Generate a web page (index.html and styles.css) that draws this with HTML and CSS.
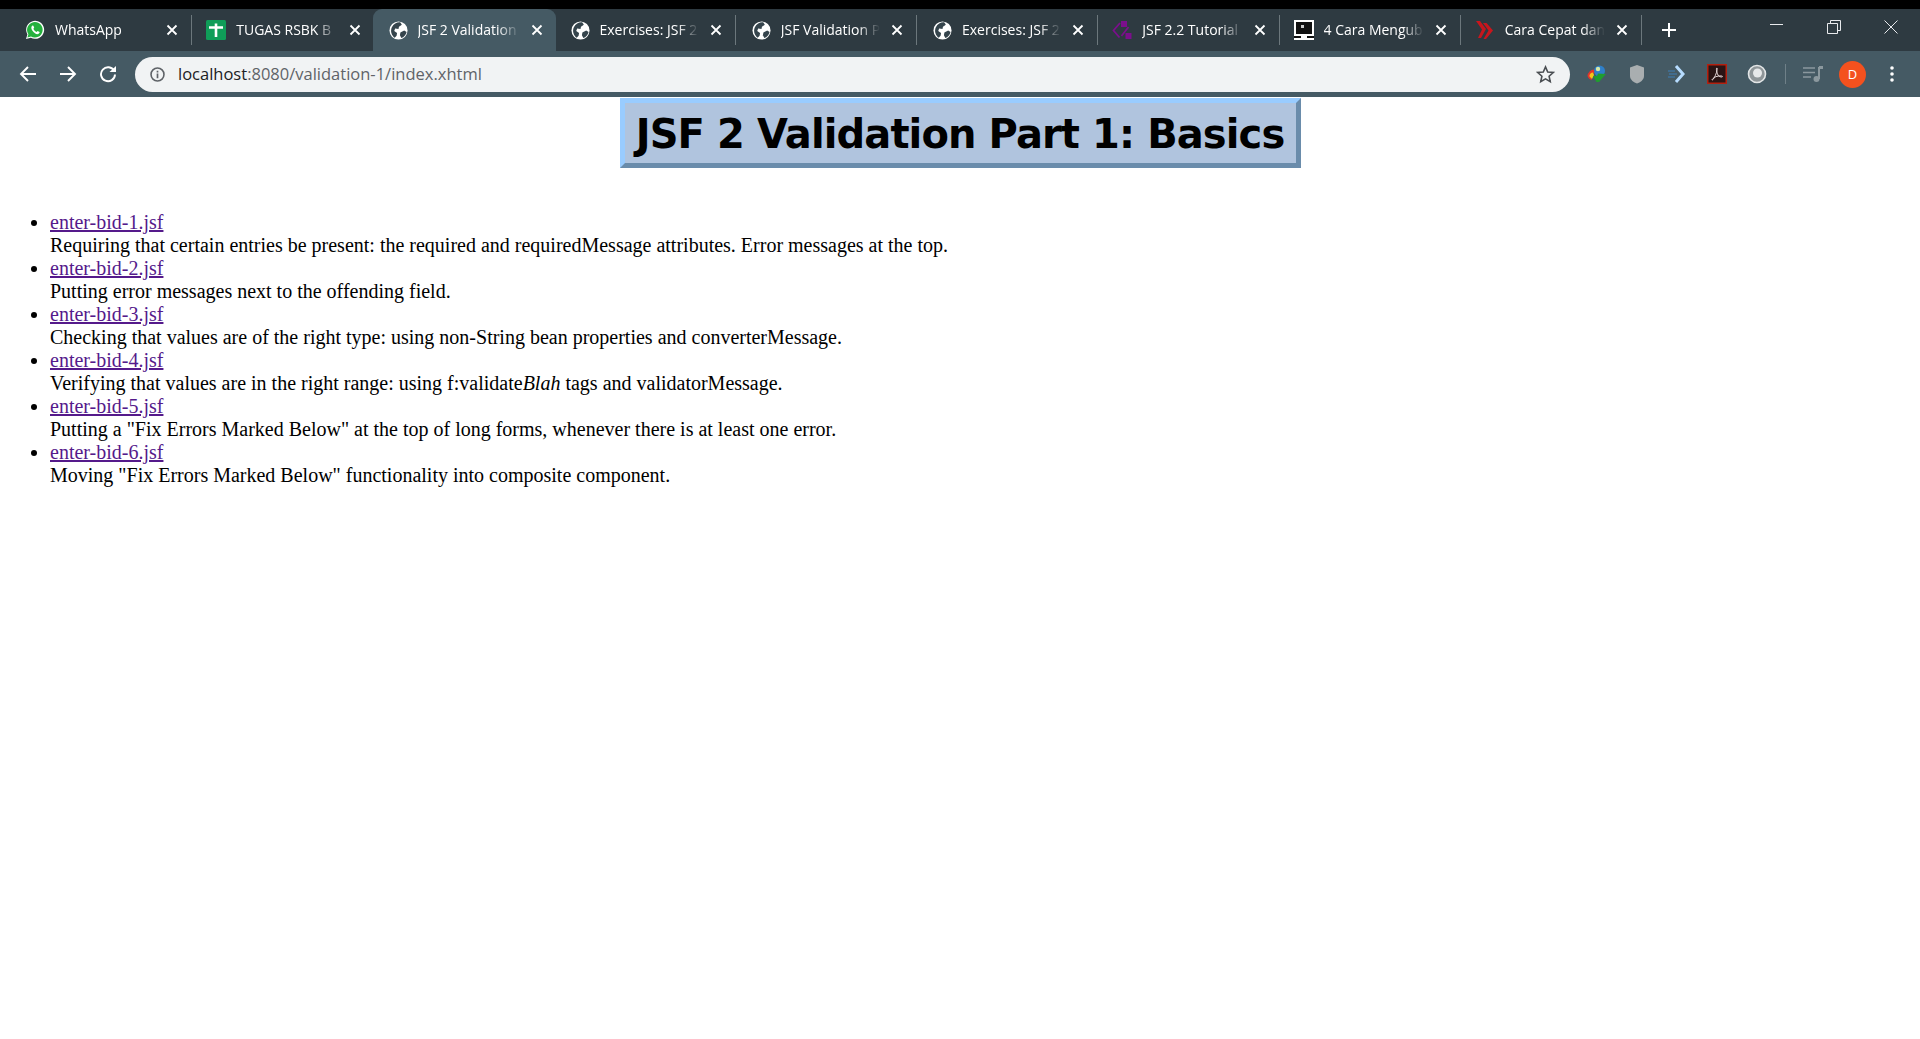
FILE: index.html
```html
<!DOCTYPE html>
<html>
<head>
  <title>JSF 2 Validation Part 1: Basics</title>
  <link rel="stylesheet" href="styles.css">
</head>
<body>
  <svg class="defs" width="0" height="0">
    <symbol id="globe" viewBox="0 0 20 20">
      <circle cx="10" cy="10" r="9.5" fill="#fff"/>
      <path d="M3 6.5 C5 2.5 9 1 12 1.5 L13.5 4 L10.5 6 L10 8.5 L6.5 8 L5.5 10.5 L8.5 12.5 L8 15.5 L6 17.5 C3 15.5 1 11 3 6.5Z" fill="#35444c"/>
      <path d="M12 12 L16 10 L18.5 11.5 C18 14.5 15.5 17 13 18 L11.5 15Z" fill="#35444c"/>
    </symbol>
    <symbol id="close" viewBox="0 0 12 12">
      <path d="M1.5 1.5 L10.5 10.5 M10.5 1.5 L1.5 10.5" stroke="#fff" stroke-width="1.8" fill="none"/>
    </symbol>
  </svg>

  <div class="titlebar"></div>

  <div class="tabstrip">
    <div class="tab">
      <svg class="favicon" viewBox="0 0 20 20">
        <path d="M1 19 L2.4 14.4 A9 9 0 1 1 5.8 17.7Z" fill="#fff"/>
        <path d="M2.4 17.6 L3.4 14.2 A7.8 7.8 0 1 1 6 16.6Z" fill="#25b13e"/>
        <path d="M7.4 5.6 C6 6.6 5.8 8.6 7.6 11 C9.4 13.4 11.6 14.6 13.2 14 C14.2 13.6 14.8 12.6 14.6 12 L12.6 11 L11.6 12 C10.4 11.6 8.8 10 8.4 8.8 L9.2 7.8 L8.4 5.8Z" fill="#fff"/>
      </svg>
      <span class="tab-title">WhatsApp</span>
      <svg class="tab-close"><use href="#close"/></svg>
    </div>
    <div class="tab tab-plain">
      <svg class="favicon" viewBox="0 0 20 20">
        <rect width="20" height="20" rx="1.5" fill="#0f9d58"/>
        <path d="M3 7.5 H17 M10 3.5 V17" stroke="#fff" stroke-width="2.6" fill="none"/>
      </svg>
      <span class="tab-title">TUGAS RSBK B</span>
      <svg class="tab-close"><use href="#close"/></svg>
    </div>
    <div class="tab tab-active">
      <svg class="favicon globe"><use href="#globe"/></svg>
      <span class="tab-title">JSF 2 Validation</span>
      <svg class="tab-close"><use href="#close"/></svg>
    </div>
    <div class="tab">
      <svg class="favicon globe"><use href="#globe"/></svg>
      <span class="tab-title">Exercises: JSF 2</span>
      <svg class="tab-close"><use href="#close"/></svg>
    </div>
    <div class="tab">
      <svg class="favicon globe"><use href="#globe"/></svg>
      <span class="tab-title">JSF Validation P</span>
      <svg class="tab-close"><use href="#close"/></svg>
    </div>
    <div class="tab">
      <svg class="favicon globe"><use href="#globe"/></svg>
      <span class="tab-title">Exercises: JSF 2</span>
      <svg class="tab-close"><use href="#close"/></svg>
    </div>
    <div class="tab">
      <svg class="favicon" viewBox="0 0 20 20">
        <path d="M8 3 L1.5 10.5 L7.5 17.5 M16.5 7 L9.5 16" stroke="#7b0f8c" stroke-width="1.8" fill="none"/>
        <rect x="9" y="1" width="6" height="6" fill="#7b0f8c"/>
        <rect x="13.5" y="13" width="6" height="6" fill="#7b0f8c"/>
      </svg>
      <span class="tab-title">JSF 2.2 Tutorial</span>
      <svg class="tab-close"><use href="#close"/></svg>
    </div>
    <div class="tab">
      <svg class="favicon" viewBox="0 0 20 20">
        <rect x="0" y="0" width="20" height="20" fill="#fff"/>
        <rect x="2" y="2" width="16" height="12" fill="#111"/>
        <rect x="7" y="5" width="3" height="3" fill="#ccc"/>
        <rect x="0" y="16" width="7" height="2" fill="#111"/>
        <rect x="13" y="16" width="7" height="2" fill="#111"/>
      </svg>
      <span class="tab-title">4 Cara Mengub</span>
      <svg class="tab-close"><use href="#close"/></svg>
    </div>
    <div class="tab">
      <svg class="favicon" viewBox="0 0 20 20">
        <path d="M1 1 H5 L11 9 L6 18 H3 L7 9.5Z M8 3 H11.5 L18 10.5 L11 19 H8.5 L13.5 10.5Z" fill="#c8161d"/>
      </svg>
      <span class="tab-title">Cara Cepat dan</span>
      <svg class="tab-close"><use href="#close"/></svg>
    </div>
    <svg class="new-tab" viewBox="0 0 14 14">
      <path d="M7 0 V14 M0 7 H14" stroke="#fff" stroke-width="2" fill="none"/>
    </svg>
    <div class="window-controls">
      <svg class="win-btn" viewBox="0 0 14 14"><path d="M0 4.5 H13" stroke="#e8eaed" fill="none"/></svg>
      <svg class="win-btn" viewBox="0 0 14 14"><path d="M.5 3.5 H10.5 V13.5 H.5Z M3.5 3.5 V.5 H13.5 V10.5 H10.5" stroke="#e8eaed" fill="none"/></svg>
      <svg class="win-btn" viewBox="0 0 14 14"><path d="M.5 .5 L13.5 13.5 M13.5 .5 L.5 13.5" stroke="#e8eaed" fill="none"/></svg>
    </div>
  </div>

  <div class="toolbar">
    <button class="tool-btn">
      <svg viewBox="0 0 18 18" width="18" height="18"><path d="M17 9 H2 M9 2 L2 9 L9 16" stroke="#fff" stroke-width="1.9" fill="none"/></svg>
    </button>
    <button class="tool-btn">
      <svg viewBox="0 0 18 18" width="18" height="18"><path d="M1 9 H16 M9 2 L16 9 L9 16" stroke="#fff" stroke-width="1.9" fill="none"/></svg>
    </button>
    <button class="tool-btn">
      <svg viewBox="0 0 18 18" width="18" height="18"><path d="M15.2 6 A7 7 0 1 0 16 9.5" stroke="#fff" stroke-width="1.9" fill="none"/><path d="M10.5 7 H17 V1Z" fill="#fff"/></svg>
    </button>
    <div class="omnibox">
      <svg class="info" viewBox="0 0 16 16">
        <circle cx="8" cy="8" r="6.9" stroke="#5f6368" stroke-width="1.7" fill="none"/>
        <path d="M8 7 V12 M8 4 V5.8" stroke="#5f6368" stroke-width="1.8" fill="none"/>
      </svg>
      <span class="url"><span class="host">localhost</span>:8080/validation-1/index.xhtml</span>
      <svg class="star" viewBox="0 0 18 18">
        <path d="M9 1.8 L11.1 6.6 L16.3 7.1 L12.4 10.6 L13.5 15.8 L9 13.1 L4.5 15.8 L5.6 10.6 L1.7 7.1 L6.9 6.6Z" stroke="#4a4e52" stroke-width="1.5" fill="none"/>
      </svg>
    </div>
    <div class="extensions">
      <button class="tool-btn">
        <svg viewBox="0 0 20 20" width="20" height="20">
          <path d="M0.5 12 A7 7 0 0 1 7 5.5 L8 9 A4 4 0 0 0 4 13 L5 16 A6 6 0 0 1 0.5 12Z" fill="#e3342b"/>
          <path d="M2.5 12.5 A3.5 3.5 0 0 1 6 8.5 L7 11 L5 15Z" fill="#f5c518"/>
          <circle cx="12.5" cy="7" r="5.5" fill="#2f7fc9"/>
          <circle cx="11" cy="5" r="2.2" fill="#d5e8a8"/>
          <path d="M6 12 H10 L11 9.5 L19 10 L12 18 L9.5 18 Z" fill="#1f9d2f"/>
        </svg>
      </button>
      <button class="tool-btn">
        <svg viewBox="0 0 16 20" width="16" height="20"><path d="M8 1 L15 3.5 V12 C15 16 11 18.5 8 19.5 C5 18.5 1 16 1 12 V3.5Z" fill="#a9aeb0"/></svg>
      </button>
      <button class="tool-btn">
        <svg viewBox="0 0 20 20" width="20" height="20">
          <path d="M9 2 L16 10 L9 18" stroke="#b6dcff" stroke-width="3" fill="none"/>
          <path d="M1 7 H8 M2 10 H10 M1 13 H8" stroke="#3f7fb8" stroke-width="1" fill="none"/>
        </svg>
      </button>
      <button class="tool-btn">
        <svg viewBox="0 0 20 20" width="20" height="20">
          <rect x=".75" y=".75" width="18.5" height="18.5" fill="#2a1414" stroke="#b3200f" stroke-width="1.5"/>
          <path d="M10 4 C8.6 4 10 9 11 11 C12 13 15.5 13.5 15.5 12.5 C15.5 11.5 9 11.5 6 14.5 C4.5 16 5 16.5 6 15.5 C7.5 14 9.5 9 10 6.5 C10.2 5 10.3 4 10 4Z" stroke="#e8d8d8" stroke-width="1" fill="none"/>
        </svg>
      </button>
      <button class="tool-btn">
        <svg viewBox="0 0 20 20" width="20" height="20">
          <circle cx="10" cy="10" r="8.5" fill="#8f9699" stroke="#e3e6e7" stroke-width="1.6"/>
          <circle cx="10.5" cy="9" r="4.5" fill="#e6e8e9"/>
        </svg>
      </button>
      <span class="tool-sep"></span>
      <button class="tool-btn">
        <svg viewBox="0 0 20 18" width="20" height="18">
          <path d="M0 3 H12 M0 7.5 H12 M0 12 H8" stroke="#8b989e" stroke-width="1.7" fill="none"/>
          <path d="M16 2 V14" stroke="#8b989e" stroke-width="2" fill="none"/>
          <path d="M16 1 H20 V4 H16Z" fill="#8b989e"/>
          <circle cx="13.5" cy="14" r="3" fill="#8b989e"/>
        </svg>
      </button>
      <span class="avatar">D</span>
      <button class="tool-btn">
        <svg viewBox="0 0 4 16" width="4" height="16"><circle cx="2" cy="2" r="1.8" fill="#fff"/><circle cx="2" cy="8" r="1.8" fill="#fff"/><circle cx="2" cy="14" r="1.8" fill="#fff"/></svg>
      </button>
    </div>
  </div>

  <div class="page">
    <h1 class="title">JSF 2 Validation Part 1: Basics</h1>
    <ul class="examples">
      <li><a href="#">enter-bid-1.jsf</a><br>Requiring that certain entries be present: the required and requiredMessage attributes. Error messages at the top.</li>
      <li><a href="#">enter-bid-2.jsf</a><br>Putting error messages next to the offending field.</li>
      <li><a href="#">enter-bid-3.jsf</a><br>Checking that values are of the right type: using non-String bean properties and converterMessage.</li>
      <li><a href="#">enter-bid-4.jsf</a><br>Verifying that values are in the right range: using f:validate<i>Blah</i> tags and validatorMessage.</li>
      <li><a href="#">enter-bid-5.jsf</a><br>Putting a "Fix Errors Marked Below" at the top of long forms, whenever there is at least one error.</li>
      <li><a href="#">enter-bid-6.jsf</a><br>Moving "Fix Errors Marked Below" functionality into composite component.</li>
    </ul>
  </div>
</body>
</html>
```

FILE: styles.css
```css
html, body {
  margin: 0;
  padding: 0;
  height: 100%;
}
body {
  background-color: #fff;
  overflow: hidden;
}
.defs {
  display: block;
  height: 0;
}
.titlebar {
  height: 9px;
  background-color: #000;
}

/* tabs */
.tabstrip {
  display: flex;
  align-items: center;
  height: 42px;
  padding-left: 11px;
  background-color: #2e3a41;
  font-family: "Open Sans", sans-serif;
  font-size: 14px;
  color: #fff;
}
.tab {
  display: flex;
  align-items: center;
  box-sizing: border-box;
  flex: none;
  width: 181.25px;
  height: 42px;
  padding: 0 14px;
  border-right: 1px solid;
  border-image: linear-gradient(transparent 7px, #6c777c 7px, #6c777c 35px, transparent 35px) 1;
}
.tab-plain {
  border-right: none;
  border-image: none;
}
.tab-active {
  width: 183px;
  margin-left: -1px;
  margin-right: -1px;
  background-color: #455a64;
  border-radius: 9px 9px 0 0;
  border-right: none;
  border-image: none;
}
.favicon {
  flex: none;
  width: 20px;
  height: 20px;
  margin-right: 10px;
}
.globe {
  width: 19px;
  height: 19px;
  margin-left: 2px;
}
.tab-title {
  flex: 1;
  padding-bottom: 2px;
  overflow: hidden;
  white-space: nowrap;
  -webkit-mask-image: linear-gradient(to right, #000 78%, transparent);
  mask-image: linear-gradient(to right, #000 78%, transparent);
}
.tab-close {
  flex: none;
  width: 12px;
  height: 12px;
  margin-left: 11px;
  margin-right: -1px;
}
.new-tab {
  width: 14px;
  height: 14px;
  margin-left: 20px;
}
.window-controls {
  display: flex;
  gap: 43px;
  margin-left: auto;
  margin-right: 22px;
  margin-top: -6px;
}
.win-btn {
  width: 14px;
  height: 14px;
}

/* toolbar */
.toolbar {
  display: flex;
  align-items: center;
  height: 46px;
  padding-left: 8px;
  background-color: #455a64;
}
.tool-btn {
  display: flex;
  align-items: center;
  justify-content: center;
  flex: none;
  width: 40px;
  height: 40px;
  padding: 0;
  border: none;
  background: none;
}
.omnibox {
  display: flex;
  align-items: center;
  flex: 1;
  height: 35px;
  margin: 0 7px;
  padding: 0 15px;
  border-radius: 18px;
  background-color: #f1f3f4;
  font-family: "Open Sans", sans-serif;
  font-size: 16.5px;
  color: #5f6368;
}
.info {
  width: 15px;
  height: 15px;
  margin-right: 13px;
}
.url {
  flex: 1;
  padding-bottom: 2px;
  white-space: nowrap;
}
.host {
  color: #202124;
}
.star {
  width: 19px;
  height: 19px;
}
.extensions {
  display: flex;
  align-items: center;
  flex: none;
  margin-right: 8px;
}
.tool-sep {
  width: 1px;
  height: 20px;
  margin: 0 7px 0 8px;
  background-color: #6f8088;
}
.avatar {
  display: flex;
  align-items: center;
  justify-content: center;
  width: 27px;
  height: 27px;
  margin: 0 6px;
  border-radius: 50%;
  background-color: #f4511e;
  font-family: "Open Sans", sans-serif;
  font-size: 13px;
  color: #fff;
}

/* page */
.page {
  padding: 1px 10px 0;
  font-family: "Liberation Serif", serif;
  font-size: 20px;
  color: #000;
}
.title {
  box-sizing: border-box;
  width: 681px;
  margin: 0 auto;
  padding: 2px 0 0;
  border: 5px solid;
  border-color: #99ccff #6a8cab #6a8cab #99ccff;
  background-color: #b0c4de;
  font-family: "DejaVu Sans", Verdana, sans-serif;
  font-size: 40px;
  font-weight: bold;
  letter-spacing: -0.9px;
  line-height: 58px;
  text-align: center;
  white-space: nowrap;
}
.examples {
  margin: 43px 0 0;
  padding-left: 40px;
  line-height: 23px;
}
.examples a {
  color: #551a8b;
}
```
